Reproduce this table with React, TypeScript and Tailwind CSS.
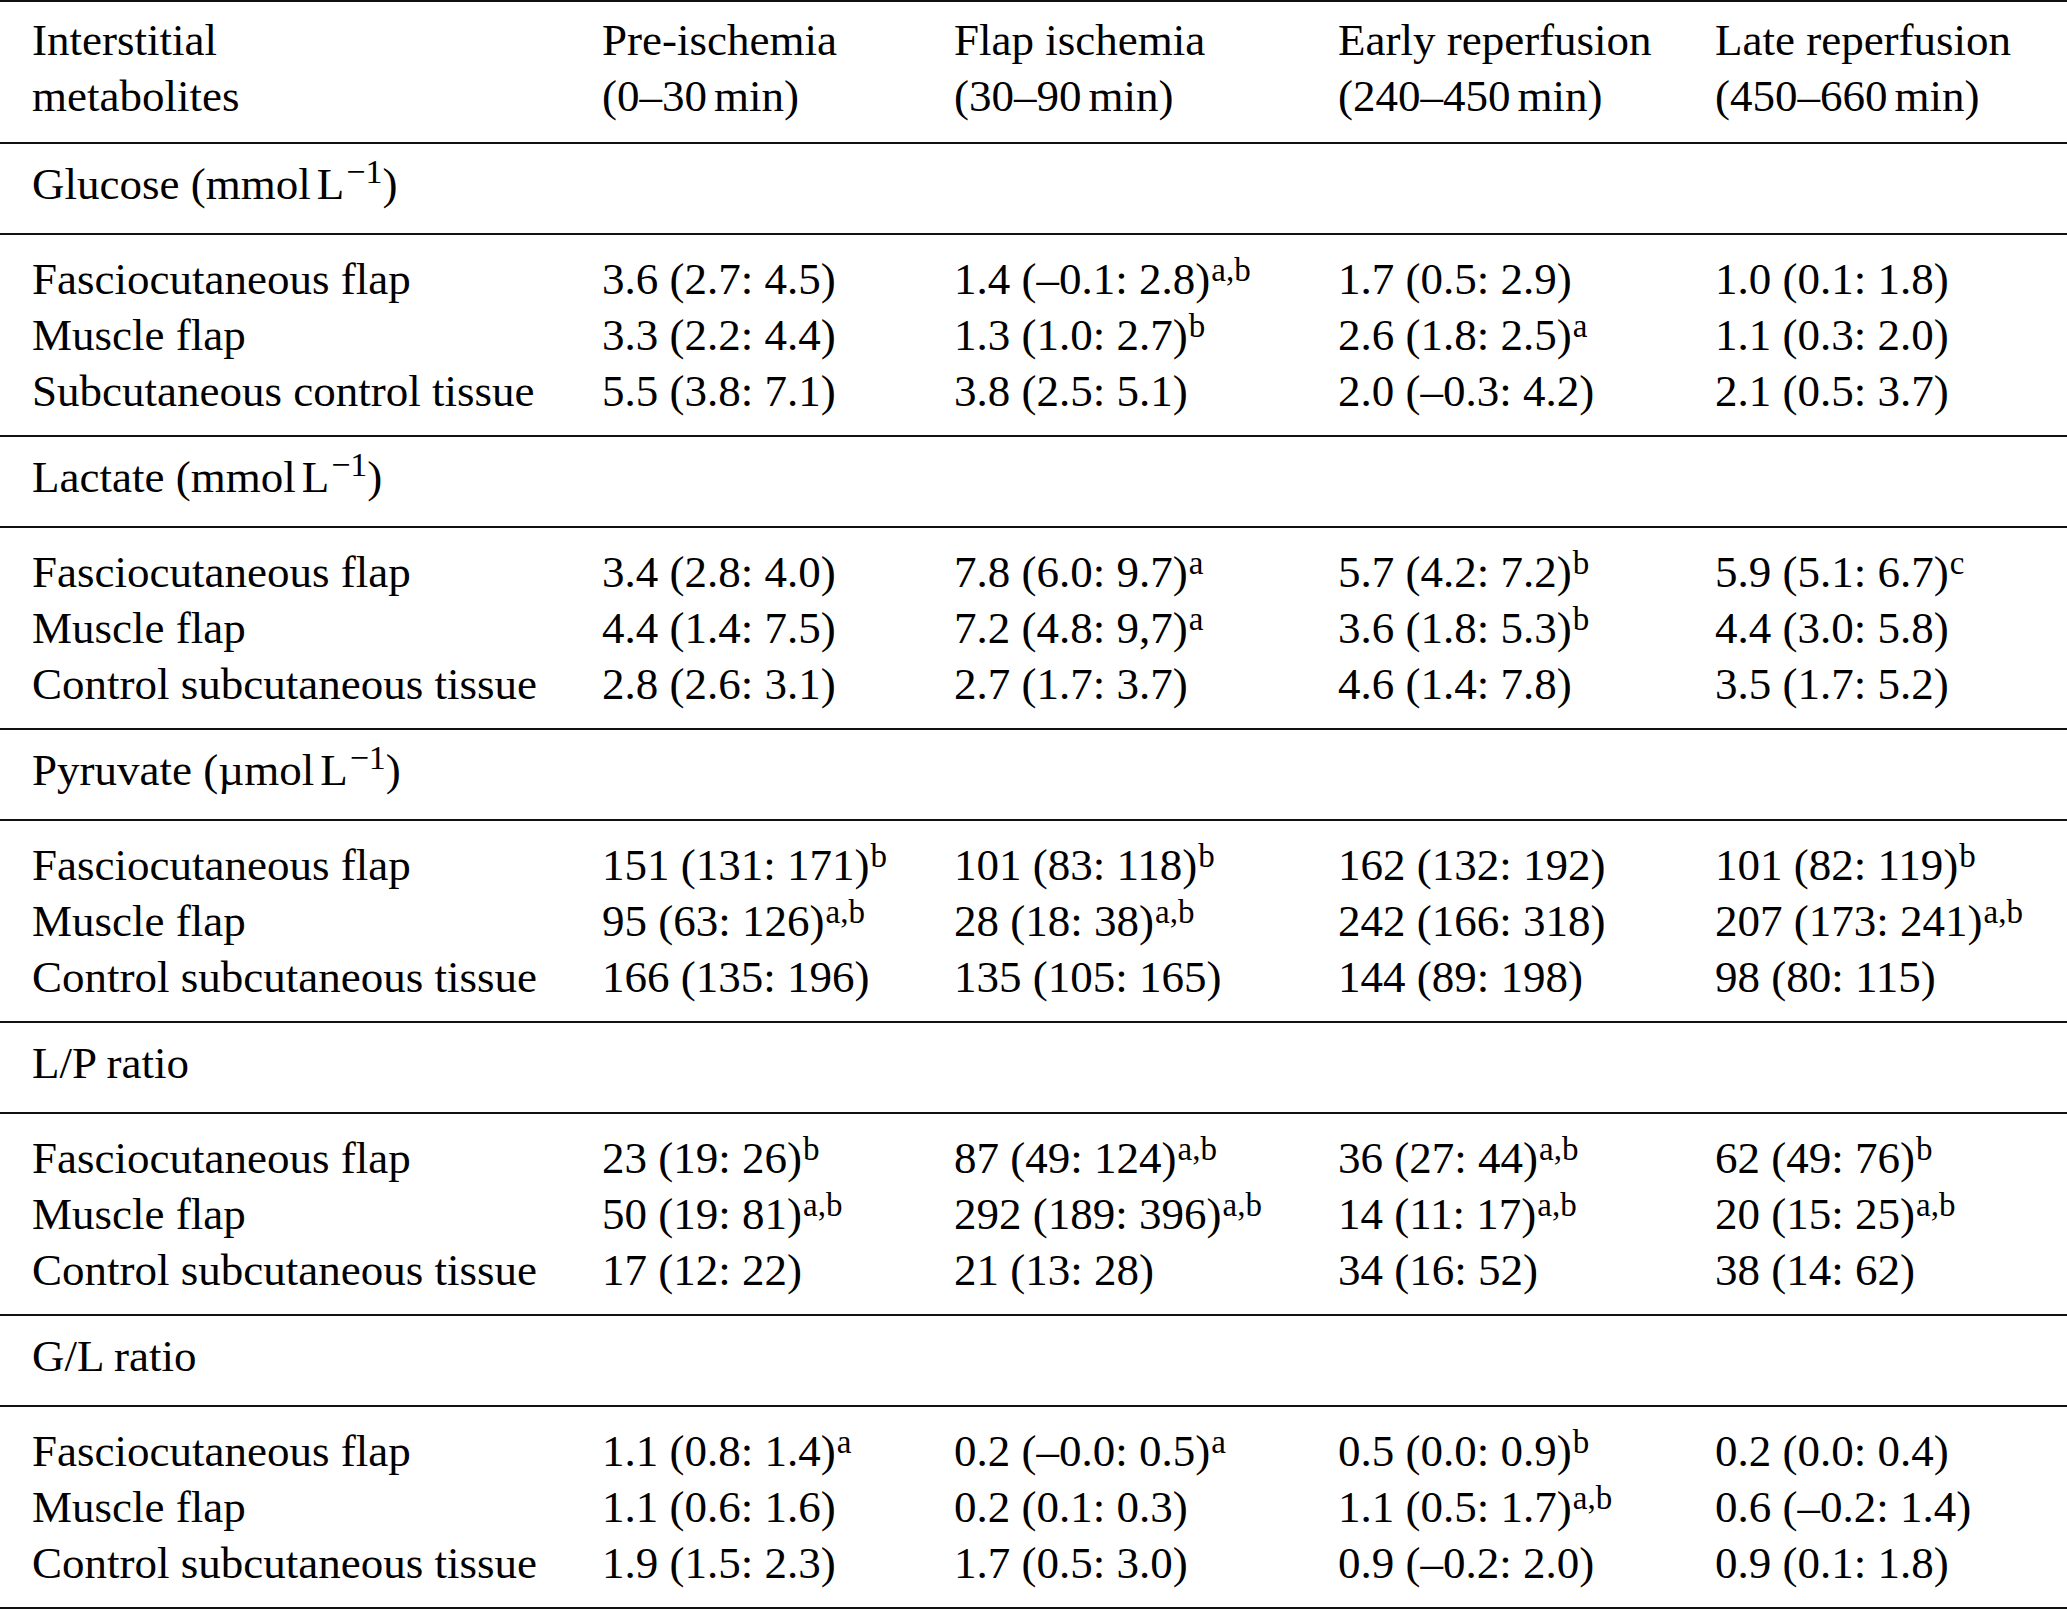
import React from "react";

type Cell = { v: string; s?: string };
type Row = { label: string; cells: Cell[] };
type Section = { title: React.ReactNode; rows: Row[] };

function Sup({ children }: { children: React.ReactNode }) {
  return (
    <span className="relative top-[-13px] text-[33px] leading-none ml-[1px]">{children}</span>
  );
}

function Unit({ pre, unit }: { pre: string; unit: string }) {
  return (
    <>
      {pre} ({unit}
      <span className="ml-[6px]">L</span>
      <span className="relative top-[-16px] text-[34px] leading-none ml-[2px]">{"\u22121"}</span>)
    </>
  );
}

const sections: Section[] = [
  {
    title: <Unit pre="Glucose" unit="mmol" />,
    rows: [
      { label: "Fasciocutaneous flap", cells: [{ v: "3.6 (2.7: 4.5)" }, { v: "1.4 (–0.1: 2.8)", s: "a,b" }, { v: "1.7 (0.5: 2.9)" }, { v: "1.0 (0.1: 1.8)" }] },
      { label: "Muscle flap", cells: [{ v: "3.3 (2.2: 4.4)" }, { v: "1.3 (1.0: 2.7)", s: "b" }, { v: "2.6 (1.8: 2.5)", s: "a" }, { v: "1.1 (0.3: 2.0)" }] },
      { label: "Subcutaneous control tissue", cells: [{ v: "5.5 (3.8: 7.1)" }, { v: "3.8 (2.5: 5.1)" }, { v: "2.0 (–0.3: 4.2)" }, { v: "2.1 (0.5: 3.7)" }] },
    ],
  },
  {
    title: <Unit pre="Lactate" unit="mmol" />,
    rows: [
      { label: "Fasciocutaneous flap", cells: [{ v: "3.4 (2.8: 4.0)" }, { v: "7.8 (6.0: 9.7)", s: "a" }, { v: "5.7 (4.2: 7.2)", s: "b" }, { v: "5.9 (5.1: 6.7)", s: "c" }] },
      { label: "Muscle flap", cells: [{ v: "4.4 (1.4: 7.5)" }, { v: "7.2 (4.8: 9,7)", s: "a" }, { v: "3.6 (1.8: 5.3)", s: "b" }, { v: "4.4 (3.0: 5.8)" }] },
      { label: "Control subcutaneous tissue", cells: [{ v: "2.8 (2.6: 3.1)" }, { v: "2.7 (1.7: 3.7)" }, { v: "4.6 (1.4: 7.8)" }, { v: "3.5 (1.7: 5.2)" }] },
    ],
  },
  {
    title: <Unit pre="Pyruvate" unit="µmol" />,
    rows: [
      { label: "Fasciocutaneous flap", cells: [{ v: "151 (131: 171)", s: "b" }, { v: "101 (83: 118)", s: "b" }, { v: "162 (132: 192)" }, { v: "101 (82: 119)", s: "b" }] },
      { label: "Muscle flap", cells: [{ v: "95 (63: 126)", s: "a,b" }, { v: "28 (18: 38)", s: "a,b" }, { v: "242 (166: 318)" }, { v: "207 (173: 241)", s: "a,b" }] },
      { label: "Control subcutaneous tissue", cells: [{ v: "166 (135: 196)" }, { v: "135 (105: 165)" }, { v: "144 (89: 198)" }, { v: "98 (80: 115)" }] },
    ],
  },
  {
    title: "L/P ratio",
    rows: [
      { label: "Fasciocutaneous flap", cells: [{ v: "23 (19: 26)", s: "b" }, { v: "87 (49: 124)", s: "a,b" }, { v: "36 (27: 44)", s: "a,b" }, { v: "62 (49: 76)", s: "b" }] },
      { label: "Muscle flap", cells: [{ v: "50 (19: 81)", s: "a,b" }, { v: "292 (189: 396)", s: "a,b" }, { v: "14 (11: 17)", s: "a,b" }, { v: "20 (15: 25)", s: "a,b" }] },
      { label: "Control subcutaneous tissue", cells: [{ v: "17 (12: 22)" }, { v: "21 (13: 28)" }, { v: "34 (16: 52)" }, { v: "38 (14: 62)" }] },
    ],
  },
  {
    title: "G/L ratio",
    rows: [
      { label: "Fasciocutaneous flap", cells: [{ v: "1.1 (0.8: 1.4)", s: "a" }, { v: "0.2 (–0.0: 0.5)", s: "a" }, { v: "0.5 (0.0: 0.9)", s: "b" }, { v: "0.2 (0.0: 0.4)" }] },
      { label: "Muscle flap", cells: [{ v: "1.1 (0.6: 1.6)" }, { v: "0.2 (0.1: 0.3)" }, { v: "1.1 (0.5: 1.7)", s: "a,b" }, { v: "0.6 (–0.2: 1.4)" }] },
      { label: "Control subcutaneous tissue", cells: [{ v: "1.9 (1.5: 2.3)" }, { v: "1.7 (0.5: 3.0)" }, { v: "0.9 (–0.2: 2.0)" }, { v: "0.9 (0.1: 1.8)" }] },
    ],
  },
];

const headers: [string, string][] = [
  ["Interstitial", "metabolites"],
  ["Pre-ischemia", "(0–30"],
  ["Flap ischemia", "(30–90"],
  ["Early reperfusion", "(240–450"],
  ["Late reperfusion", "(450–660"],
];

export default function App() {
  return (
    <div className="min-h-screen w-full bg-white text-black font-['Liberation_Serif','Times_New_Roman',serif] text-[45px] leading-[56px]">
      <div className="border-t-2 border-[#111]">
        <div className="grid grid-cols-[570px_352px_384px_377px_1fr] pl-[32px] pt-[10px] pb-[18px] border-b-2 border-[#111]">
          {headers.map(([a, b], i) => (
            <div key={i} className="whitespace-nowrap">
              <div>{a}</div>
              <div>
                {i === 0 ? (
                  b
                ) : (
                  <>
                    {b}
                    <span className="ml-[7px]">min)</span>
                  </>
                )}
              </div>
            </div>
          ))}
        </div>
        {sections.map((sec, si) => (
          <div key={si}>
            <div className="pl-[32px] pt-[12px] pb-[21px] border-b-2 border-[#111] whitespace-nowrap">
              {sec.title}
            </div>
            <div className="pt-[16px] pb-[16px] border-b-2 border-[#111]">
              {sec.rows.map((row, ri) => (
                <div key={ri} className="grid grid-cols-[570px_352px_384px_377px_1fr] pl-[32px] whitespace-nowrap">
                  <div>{row.label}</div>
                  {row.cells.map((c, ci) => (
                    <div key={ci}>
                      {c.v}
                      {c.s ? <Sup>{c.s}</Sup> : null}
                    </div>
                  ))}
                </div>
              ))}
            </div>
          </div>
        ))}
      </div>
    </div>
  );
}
